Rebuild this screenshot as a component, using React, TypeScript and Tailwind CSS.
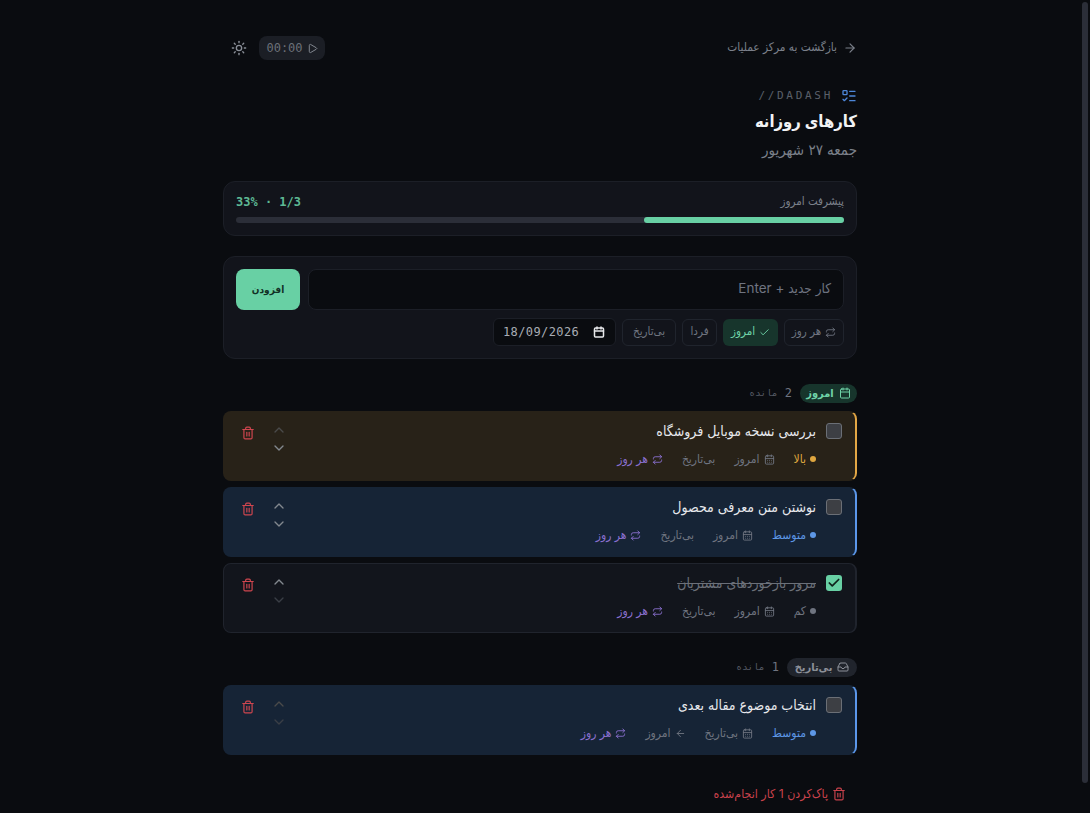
import { ArrowLeft, ArrowRight, Calendar, CalendarDays, Check, ChevronDown, ChevronUp, Inbox, ListTodo, Play, Repeat, Sun, Trash2 } from 'lucide-react'

const sans = { fontFamily: 'Inter, "DejaVu Sans Condensed", "DejaVu Sans", sans-serif' }
const mono = { fontFamily: '"DejaVu Sans Mono", monospace' }

const todayTasks = [
  {
    title: 'بررسی نسخه موبایل فروشگاه',
    priority: 'بالا',
    tone: 'high',
    upOff: true,
    downOff: false,
    done: false
  },
  {
    title: 'نوشتن متن معرفی محصول',
    priority: 'متوسط',
    tone: 'mid',
    upOff: false,
    downOff: false,
    done: false
  },
  {
    title: 'مرور بازخوردهای مشتریان',
    priority: 'کم',
    tone: 'low',
    upOff: false,
    downOff: true,
    done: true
  }
]

const cardTone: Record<string, string> = {
  high: 'bg-[#282218] border-transparent border-r-[#e3a745]',
  mid: 'bg-[#162436] border-transparent border-r-[#5b97ea]',
  low: 'bg-[#12151c] border-[#20242d]'
}

const priorityTone: Record<string, string> = {
  high: 'text-[#dfa63f]',
  mid: 'text-[#5d97e6]',
  low: 'text-[#6f7480]'
}

const dotTone: Record<string, string> = {
  high: 'bg-[#dfa63f]',
  mid: 'bg-[#5d97e6]',
  low: 'bg-[#6f7480]'
}

function TaskCard({ t, moved }: { t: any; moved?: boolean }) {
  return (
    <div className={`flex h-[70px] rounded-lg border border-r-2 pr-[13px] pl-[17px] pt-[11px] ${cardTone[t.tone]}`}>
      {t.done ? (
        <div className="flex h-4 w-4 shrink-0 items-center justify-center rounded-[3px] bg-[#68d0a4]">
          <Check className="h-3.5 w-3.5 text-[#10231c]" strokeWidth={3} />
        </div>
      ) : (
        <div className="h-4 w-4 shrink-0 rounded-[3px] border border-[#6b6f76] bg-[#3d3f44]" />
      )}
      <div className="mr-[10px] flex-1">
        <div className={`-mt-[2px] text-[14px] leading-[20px] ${t.done ? 'text-[#6b7079] line-through' : 'text-[#e6e8ec]'}`}>{t.title}</div>
        <div className="mt-[10px] flex items-center gap-[19px] text-[12px] leading-[16px] text-[#6f7480]">
          <span className={`flex items-center gap-[4px] ${priorityTone[t.tone]}`}>
            <span className={`h-[6px] w-[6px] rounded-full ${dotTone[t.tone]}`} />
            {t.priority}
          </span>
          <span className="flex items-center gap-[4px]">
            <CalendarDays className="h-[11px] w-[11px]" />
            {moved ? 'بی‌تاریخ' : 'امروز'}
          </span>
          <span className="flex items-center gap-[4px]">
            {moved && <ArrowLeft className="h-[11px] w-[11px]" />}
            {moved ? 'امروز' : 'بی‌تاریخ'}
          </span>
          <span className="flex items-center gap-[4px] text-[#8a70cf]">
            <Repeat className="h-[11px] w-[11px]" />
            هر روز
          </span>
        </div>
      </div>
      <div className="-mt-[1px] flex flex-col items-center gap-[2px]">
        <ChevronUp className={`h-4 w-4 ${t.upOff ? 'text-[#4a4a4a]' : 'text-[#83888f]'}`} />
        <ChevronDown className={`h-4 w-4 ${t.downOff ? 'text-[#3a3e46]' : 'text-[#83888f]'}`} />
      </div>
      <Trash2 className="mr-[16px] mt-[3px] h-[14px] w-[14px] text-[#d0464f]" />
    </div>
  )
}

function GroupHead({ label, count, green }: { label: string; count: number; green?: boolean }) {
  return (
    <div className="flex h-[20px] items-center gap-[8px]">
      <span className={`flex h-[19px] items-center justify-center gap-[5px] rounded-full text-[11px] font-bold ${green ? 'w-[57px] bg-[#17352c] text-[#6fd3a7]' : 'w-[70px] bg-[#20242c] text-[#8c9099]'}`}>
        {green ? <Calendar className="h-3 w-3" /> : <Inbox className="h-3 w-3" />}
        {label}
      </span>
      <span className="flex items-center gap-[7px] text-[#6f7480]" style={mono}>
        <span className="text-[12px]">{count}</span>
        <span className="text-[9.5px] tracking-[5px] text-[#565b65]">مانده</span>
      </span>
    </div>
  )
}

function Chip({ children, active, width }: { children: React.ReactNode; active?: boolean; width: string }) {
  return (
    <span className={`flex h-[27px] items-center justify-center gap-[4px] rounded-md border text-[11.5px] ${width} ${active ? 'border-transparent bg-[#17352c] text-[#6fd3a7]' : 'border-[#20242d] text-[#6f7480]'}`}>
      {children}
    </span>
  )
}

export default function App() {
  return (
    <div style={sans} className="relative h-[813px] overflow-hidden bg-[#0a0c10]">
      {/* scrollbar thumb */}
      <div className="absolute right-[2px] top-[2px] h-[781px] w-[6px] rounded-full bg-[#2b2e38]" />

      <div className="w-[1080px]">
        <div dir="rtl" className="mx-auto w-[634px] pt-[36px]">
          {/* top bar */}
          <div className="flex h-[24px] items-center justify-between">
            <div className="flex items-center gap-[6px] text-[11.8px] text-[#7b808a]">
              <ArrowRight className="h-3.5 w-3.5" />
              بازگشت به مرکز عملیات
            </div>
            <div className="flex items-center gap-[12px] pl-[8px]">
              <div dir="ltr" className="flex h-[24px] w-[66px] items-center justify-center gap-[4px] rounded-lg bg-[#1b1e25] text-[12px] text-[#6b7078]" style={mono}>
                00:00
                <Play className="h-[11px] w-[11px] text-[#8a8f98]" />
              </div>
              <Sun className="h-4 w-4 text-[#8a8f98]" />
            </div>
          </div>

          {/* title */}
          <div dir="ltr" className="mt-[26px] flex h-[20px] items-center justify-end gap-[8px]">
            <span className="text-[11px] tracking-[2.7px] text-[#5b606a]" style={mono}>//DADASH</span>
            <ListTodo className="h-4 w-4 text-[#4d86d8]" />
          </div>
          <h1 className="mt-[1px] text-[16.5px] font-bold leading-[28px] text-[#f1f2f4]">کارهای روزانه</h1>
          <div className="mt-[4px] text-[15px] leading-[22px] text-[#7b808a]">جمعه ۲۷ شهریور</div>

          {/* progress */}
          <div className="mt-[20px] h-[55px] rounded-xl border border-[#1c1f27] bg-[#12141b] px-[12px] pt-[10px]">
            <div className="flex h-[20px] items-center justify-between">
              <span className="text-[11.5px] text-[#7b808a]">پیشرفت امروز</span>
              <span dir="ltr" className="text-[12px] font-bold text-[#5db994]" style={mono}>33% · 1/3</span>
            </div>
            <div className="mt-[5px] h-[6px] rounded-full bg-[#2b2e38]">
              <div className="h-[6px] w-[200px] rounded-full bg-[#68d0a4]" />
            </div>
          </div>

          {/* add */}
          <div className="mt-[20px] h-[103px] rounded-xl border border-[#1c1f27] bg-[#12141b] p-[12px]">
            <div className="flex gap-[8px]">
              <div className="flex h-[41px] flex-1 items-center rounded-lg border border-[#1c1f27] bg-[#0a0c10] px-[12px] pb-[2px] text-[13.5px] text-[#6f7480]">
                کار جدید + Enter
              </div>
              <button className="h-[41px] w-[64px] rounded-lg bg-[#68d0a4] text-[10px] font-bold text-[#123026]">افزودن</button>
            </div>
            <div className="mt-[8px] flex items-center gap-[6px]">
              <Chip width="w-[60px]">
                <Repeat className="h-[11px] w-[11px]" />
                هر روز
              </Chip>
              <Chip active width="w-[55px]">
                <Check className="h-[11px] w-[11px]" />
                امروز
              </Chip>
              <Chip width="w-[35px]">فردا</Chip>
              <Chip width="w-[54px]">بی‌تاریخ</Chip>
              <div dir="ltr" className="flex h-[28px] w-[123px] items-center justify-between rounded-md border border-[#1c1f27] bg-[#0a0c10] pl-[9px] pr-[10px] text-[12px] tracking-[0.4px] text-[#a9adb5]" style={mono}>
                18/09/2026
                <Calendar className="h-3 w-3 text-[#e8e9eb]" strokeWidth={3} />
              </div>
            </div>
          </div>

          {/* today */}
          <div className="mt-[24px]">
            <GroupHead label="امروز" count={2} green />
          </div>
          <div className="mt-[8px] flex flex-col gap-[6px]">
            {todayTasks.map((t) => (
              <TaskCard key={t.title} t={t} />
            ))}
          </div>

          {/* no date */}
          <div className="mt-[24px]">
            <GroupHead label="بی‌تاریخ" count={1} />
          </div>
          <div className="mt-[8px]">
            <TaskCard
              moved
              t={{ title: 'انتخاب موضوع مقاله بعدی', priority: 'متوسط', tone: 'mid', upOff: true, downOff: true, done: false }}
            />
          </div>

          {/* clear */}
          <div className="mt-[30px] flex items-center gap-[4px] pr-[11px] text-[12.3px] text-[#c9424c]">
            <Trash2 className="h-3.5 w-3.5" />
            پاک‌کردن 1 کار انجام‌شده
          </div>
        </div>
      </div>
    </div>
  )
}
